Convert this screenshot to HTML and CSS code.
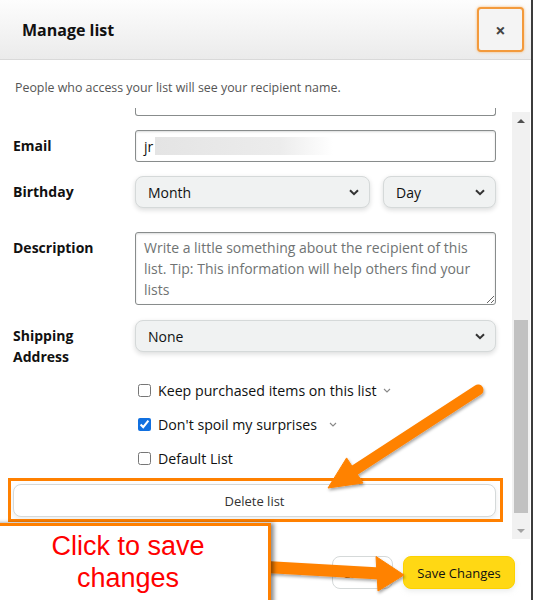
FILE: index.html
```html
<!DOCTYPE html>
<html lang="en">
<head>
  <meta charset="UTF-8" />
  <meta name="viewport" content="width=device-width, initial-scale=1.0"/>
  <title>Manage list</title>
  <link rel="stylesheet" href="styles.css">
</head>
<body>

  <div class="modal">

    <!-- Header -->
    <div class="modal-header">
      <h1>Manage list</h1>
      <button class="close-btn">&times;</button>
    </div>

    <p class="notice">People who access your list will see your recipient name.</p>

    <!-- Scrolling form -->
    <div class="modal-body">
      <div class="form">
        <div class="cut-field"></div>

        <div class="row">
          <label class="field-label">Email</label>
          <div class="input">jr<span class="blur"></span></div>
        </div>

        <div class="row">
          <label class="field-label">Birthday</label>
          <div class="select-pair">
            <div class="select select-month">
              <span>Month</span>
              <svg width="10" height="7" viewBox="0 0 10 7"><path d="M1 1.2 L5 5.2 L9 1.2" fill="none" stroke="#333" stroke-width="2"/></svg>
            </div>
            <div class="select select-day">
              <span>Day</span>
              <svg width="10" height="7" viewBox="0 0 10 7"><path d="M1 1.2 L5 5.2 L9 1.2" fill="none" stroke="#333" stroke-width="2"/></svg>
            </div>
          </div>
        </div>

        <div class="row row-desc">
          <label class="field-label">Description</label>
          <textarea class="textarea" placeholder="Write a little something about the recipient of this list. Tip: This information will help others find your lists"></textarea>
        </div>

        <div class="row row-ship">
          <label class="field-label">Shipping<br>Address</label>
          <div class="select select-wide">
            <span>None</span>
            <svg width="10" height="7" viewBox="0 0 10 7"><path d="M1 1.2 L5 5.2 L9 1.2" fill="none" stroke="#333" stroke-width="2"/></svg>
          </div>
        </div>

        <div class="options">
          <label class="option">
            <input type="checkbox">
            <span>Keep purchased items on this list</span>
            <svg class="hint hint-near" width="8" height="5" viewBox="0 0 8 5"><path d="M1 1 L4 4 L7 1" fill="none" stroke="#888" stroke-width="1.1"/></svg>
          </label>
          <label class="option">
            <input type="checkbox" checked>
            <span>Don't spoil my surprises</span>
            <svg class="hint hint-far" width="8" height="5" viewBox="0 0 8 5"><path d="M1 1 L4 4 L7 1" fill="none" stroke="#888" stroke-width="1.1"/></svg>
          </label>
          <label class="option">
            <input type="checkbox">
            <span>Default List</span>
          </label>
        </div>

        <button class="delete-btn">Delete list</button>
      </div>

      <!-- Fake scrollbar -->
      <div class="scrollbar">
        <div class="scroll-arrow"><span class="tri-up"></span></div>
        <div class="scroll-gap"></div>
        <div class="scroll-thumb"></div>
        <div class="scroll-gap-end"></div>
        <div class="scroll-arrow"><span class="tri-down"></span></div>
      </div>
    </div>

    <!-- Footer -->
    <div class="modal-footer">
      <button class="btn btn-cancel">Cancel</button>
      <button class="btn btn-save">Save Changes</button>
    </div>

    <!-- Tutorial annotations drawn on top -->
    <svg class="annotations" width="533" height="600" viewBox="0 0 533 600">
      <defs>
        <filter id="shadow" x="-10%" y="-10%" width="130%" height="130%">
          <feDropShadow dx="1" dy="2" stdDeviation="1.5" flood-color="#000" flood-opacity="0.35"/>
        </filter>
      </defs>
      <rect x="9.5" y="479.5" width="492" height="41" fill="none" stroke="#ff8000" stroke-width="3"/>
      <g fill="#ff8205" stroke="#ff8205" filter="url(#shadow)">
        <line x1="478" y1="390" x2="352" y2="472" stroke-width="11" stroke-linecap="round"/>
        <polygon points="328,488 346.6,457.9 363,483" stroke-width="1" stroke-linejoin="round"/>
      </g>
      <g fill="#ff8205" stroke="#ff8205" filter="url(#shadow)">
        <line x1="266" y1="567" x2="380" y2="573.5" stroke-width="12"/>
        <polygon points="404,575 376,556.5 378,591" stroke-width="1" stroke-linejoin="round"/>
      </g>
    </svg>

    <div class="callout">Click to save<br>changes</div>
  </div>

</body>
</html>
```

FILE: styles.css
```css
body {
  margin: 0;
  background-color: #3c3c3c;
  font-family: 'Open Sans', 'Noto Sans', sans-serif;
  color: #0f1111;
  overflow: hidden;
}
.modal {
  position: relative;
  width: 531px;
  height: 600px;
  background: #fff;
  display: flex;
  flex-direction: column;
  overflow: hidden;
}
.modal-header {
  height: 59px;
  flex: none;
  display: flex;
  align-items: center;
  justify-content: space-between;
  padding: 0 7px 0 22px;
  background: linear-gradient(#fdfdfd, #ebebeb);
  border-bottom: 1px solid #d9d9d9;
}
h1 {
  margin: 0;
  font-size: 16px;
  font-weight: 700;
  color: #111;
}
.close-btn {
  width: 47px;
  height: 45px;
  box-sizing: border-box;
  border: 2px solid #f39a3c;
  border-radius: 4px;
  background: #f4f4f4;
  box-shadow: 0 0 3px #f8b870;
  font-family: 'Open Sans', sans-serif;
  font-size: 18px;
  font-weight: 700;
  color: #444;
  padding: 0;
}
.notice {
  margin: 0;
  flex: none;
  padding: 20px 15px 12px;
  font-size: 12.4px;
  line-height: 16px;
  color: #555;
}
.modal-body {
  flex: 1;
  display: flex;
  min-height: 0;
}
.form {
  flex: 1;
  overflow: hidden;
  padding: 0 16px 0 13px;
}
.cut-field {
  margin-left: 122px;
  height: 7px;
  border: 1px solid #888c8c;
  border-top: 0;
  border-radius: 0 0 3px 3px;
}
.row {
  display: flex;
  margin-top: 14px;
}
.row-desc {
  margin-top: 24px;
}
.row-ship {
  margin-top: 15px;
}
.field-label {
  width: 122px;
  flex: none;
  padding-top: 5px;
  font-size: 14px;
  font-weight: 700;
  line-height: 21px;
  color: #111;
}
.input {
  flex: 1;
  height: 32px;
  box-sizing: border-box;
  display: flex;
  align-items: center;
  padding: 0 8px;
  border: 1px solid #888c8c;
  border-radius: 3px;
  box-shadow: inset 0 1px 2px rgba(15, 17, 17, 0.15);
  font-size: 14px;
}
.blur {
  width: 178px;
  height: 18px;
  margin-left: 2px;
  background: linear-gradient(to right, #e4e4e4, #ececec 70%, rgba(255, 255, 255, 0));
}
.select-pair {
  flex: 1;
  display: flex;
  gap: 13px;
}
.select {
  height: 32px;
  box-sizing: border-box;
  display: flex;
  align-items: center;
  justify-content: space-between;
  padding: 0 10px 0 12px;
  background: #f0f2f2;
  border: 1px solid #d5d9d9;
  border-radius: 8px;
  box-shadow: 0 2px 5px rgba(15, 17, 17, 0.15);
  font-size: 14px;
  color: #0f1111;
}
.select-month {
  width: 235px;
}
.select-day {
  flex: 1;
}
.select-wide {
  flex: 1;
}
.textarea {
  flex: 1;
  height: 73px;
  box-sizing: border-box;
  margin: 0;
  padding: 4px 4px 4px 8px;
  border: 1px solid #888c8c;
  border-radius: 3px;
  box-shadow: inset 0 1px 2px rgba(15, 17, 17, 0.15);
  font-family: 'Open Sans', sans-serif;
  font-size: 14px;
  line-height: 21px;
}
.textarea::placeholder {
  color: #6f7373;
}
.options {
  margin-top: 6px;
  padding-left: 125px;
}
.option {
  display: flex;
  align-items: center;
  height: 34px;
  font-size: 14.2px;
  color: #0f1111;
}
.option input {
  width: 13px;
  height: 13px;
  margin: 0 7px 0 0;
  accent-color: #1170e0;
}
.hint-near {
  margin-left: 6px;
}
.hint-far {
  margin-left: 12px;
}
.delete-btn {
  display: block;
  width: 100%;
  height: 33px;
  margin-top: 9px;
  background: #fff;
  border: 1px solid #d5d9d9;
  border-radius: 8px;
  box-shadow: 0 2px 5px rgba(213, 217, 217, 0.5);
  font-family: 'Open Sans', sans-serif;
  font-size: 13px;
  color: #333;
}
.scrollbar {
  width: 18px;
  flex: none;
  margin: 4px 1px 6px 0;
  background: #f1f1f1;
  display: flex;
  flex-direction: column;
  align-items: center;
}
.scroll-arrow {
  height: 17px;
  width: 100%;
  display: flex;
  align-items: center;
  justify-content: center;
}
.tri-up {
  border: 4px solid transparent;
  border-top: 0;
  border-bottom: 4px solid #505050;
}
.tri-down {
  border: 4px solid transparent;
  border-bottom: 0;
  border-top: 4px solid #a3a3a3;
}
.scroll-gap {
  height: 191px;
}
.scroll-thumb {
  width: 14px;
  height: 193px;
  background: #c1c1c1;
}
.scroll-gap-end {
  flex: 1;
}
.modal-footer {
  height: 55px;
  flex: none;
  box-sizing: border-box;
  display: flex;
  justify-content: flex-end;
  gap: 10px;
  padding: 11px 16px 0 0;
}
.btn {
  height: 33px;
  border-radius: 8px;
  font-family: 'Open Sans', sans-serif;
  font-size: 13px;
  color: #0f1111;
}
.btn-cancel {
  width: 61px;
  background: #fff;
  border: 1px solid #d5d9d9;
}
.btn-save {
  width: 112px;
  background: #ffd814;
  border: 1px solid #fcd200;
  box-shadow: 0 2px 5px rgba(213, 217, 217, 0.5);
}
.annotations {
  position: absolute;
  top: 0;
  left: 0;
  pointer-events: none;
}
.callout {
  position: absolute;
  left: -8px;
  top: 523px;
  width: 272px;
  height: 80px;
  padding: 4px 4px 0 0;
  background: #fff;
  border-top: 3px solid #ff8000;
  border-right: 3px solid #ff8000;
  box-shadow: 3px 0 4px rgba(0, 0, 0, 0.45);
  font-family: 'Liberation Sans', Arial, sans-serif;
  font-size: 27px;
  line-height: 32px;
  color: #ff0000;
  text-align: center;
}
```
